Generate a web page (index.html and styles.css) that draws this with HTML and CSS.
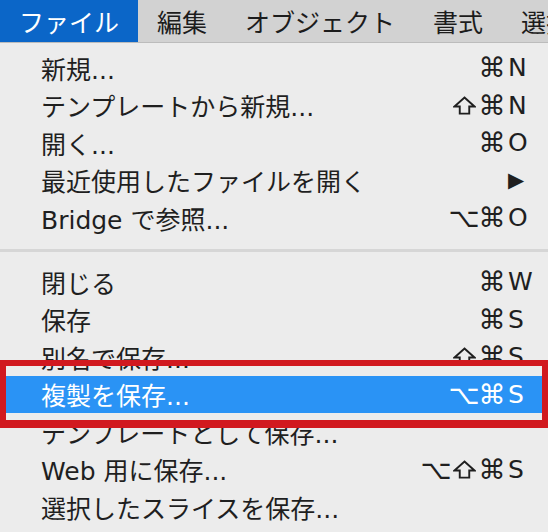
FILE: index.html
```html
<!DOCTYPE html>
<html>
<head>
  <meta charset="utf-8">
  <meta name="viewport" content="width=device-width, initial-scale=1.0">
  <title>ファイル メニュー</title>
  <link rel="stylesheet" href="styles.css">
</head>
<body>
  <div class="screen">
    <div class="menubar">
      <span class="menubar-item menubar-item-open">ファイル</span>
      <span class="menubar-item">編集</span>
      <span class="menubar-item">オブジェクト</span>
      <span class="menubar-item">書式</span>
      <span class="menubar-item">選択</span>
    </div>

    <div class="menu">
      <div class="menu-item">
        <span class="label">新規...</span>
        <span class="mods"><span class="mod">⌘</span></span>
        <span class="key">N</span>
      </div>
      <div class="menu-item">
        <span class="label">テンプレートから新規...</span>
        <span class="mods">
          <span class="mod"><svg class="shift" viewBox="0 0 24 20"><path d="M12 1.5 L22.5 11 H17 V18.5 H7 V11 H1.5 Z"/></svg></span><span class="mod">⌘</span>
        </span>
        <span class="key">N</span>
      </div>
      <div class="menu-item">
        <span class="label">開く...</span>
        <span class="mods"><span class="mod">⌘</span></span>
        <span class="key">O</span>
      </div>
      <div class="menu-item">
        <span class="label">最近使用したファイルを開く</span>
        <span class="key key-arrow">▶</span>
      </div>
      <div class="menu-item">
        <span class="label">Bridge で参照...</span>
        <span class="mods"><span class="mod">⌥</span><span class="mod">⌘</span></span>
        <span class="key">O</span>
      </div>

      <div class="separator"></div>

      <div class="menu-item">
        <span class="label">閉じる</span>
        <span class="mods"><span class="mod">⌘</span></span>
        <span class="key">W</span>
      </div>
      <div class="menu-item">
        <span class="label">保存</span>
        <span class="mods"><span class="mod">⌘</span></span>
        <span class="key">S</span>
      </div>
      <div class="menu-item">
        <span class="label">別名で保存...</span>
        <span class="mods">
          <span class="mod"><svg class="shift" viewBox="0 0 24 20"><path d="M12 1.5 L22.5 11 H17 V18.5 H7 V11 H1.5 Z"/></svg></span><span class="mod">⌘</span>
        </span>
        <span class="key">S</span>
      </div>
      <div class="menu-item menu-item-selected">
        <span class="label">複製を保存...</span>
        <span class="mods"><span class="mod">⌥</span><span class="mod">⌘</span></span>
        <span class="key">S</span>
      </div>
      <div class="menu-item">
        <span class="label">テンプレートとして保存...</span>
      </div>
      <div class="menu-item">
        <span class="label">Web 用に保存...</span>
        <span class="mods">
          <span class="mod">⌥</span><span class="mod"><svg class="shift" viewBox="0 0 24 20"><path d="M12 1.5 L22.5 11 H17 V18.5 H7 V11 H1.5 Z"/></svg></span><span class="mod">⌘</span>
        </span>
        <span class="key">S</span>
      </div>
      <div class="menu-item">
        <span class="label">選択したスライスを保存...</span>
      </div>
    </div>

    <div class="highlight-box"></div>
  </div>
</body>
</html>
```

FILE: styles.css
```css
body {
  margin: 0;
  background-color: #ececec;
  font-family: 'DejaVu Sans', 'Noto Sans CJK JP', sans-serif;
  color: #1f1f1f;
  overflow: hidden;
}
.screen {
  position: relative;
  width: 548px;
  height: 532px;
  overflow: hidden;
}
.menubar {
  display: flex;
  height: 42px;
  background-color: #d2d2d2;
  border-bottom: 1px solid #bcbcbc;
  white-space: nowrap;
  font-family: 'Noto Sans CJK JP', sans-serif;
  font-size: 25px;
  line-height: 42px;
}
.menubar-item {
  padding: 0 19px;
  color: #1c1c1c;
}
.menubar-item-open {
  background-color: #0b66c8;
  color: #ffffff;
}
.menu {
  padding-top: 6px;
  background-color: #ececec;
}
.menu-item {
  display: flex;
  align-items: center;
  height: 37.5px;
  padding: 0 12px 0 41px;
  font-size: 25px;
  white-space: nowrap;
}
.menu-item-selected {
  background-color: #2a93f5;
  color: #ffffff;
}
.label {
  flex: 1;
}
.mods {
  display: flex;
  align-items: center;
}
.mod {
  display: flex;
  justify-content: center;
  align-items: center;
  width: 28px;
  font-size: 27px;
}
.shift {
  width: 23px;
  height: 19px;
  fill: none;
  stroke: currentColor;
  stroke-width: 2;
  stroke-linejoin: miter;
}
.key {
  width: 30px;
  padding-left: 2px;
  box-sizing: border-box;
}
.key-arrow {
  font-size: 21px;
  margin-left: -5px;
}
.separator {
  height: 3px;
  margin: 12px 0 11.5px;
  background-color: #d6d6d6;
}
.highlight-box {
  position: absolute;
  top: 360px;
  left: 0;
  width: 548px;
  height: 68px;
  box-sizing: border-box;
  border: 6px solid #d1191f;
  border-bottom-width: 8px;
}
```
